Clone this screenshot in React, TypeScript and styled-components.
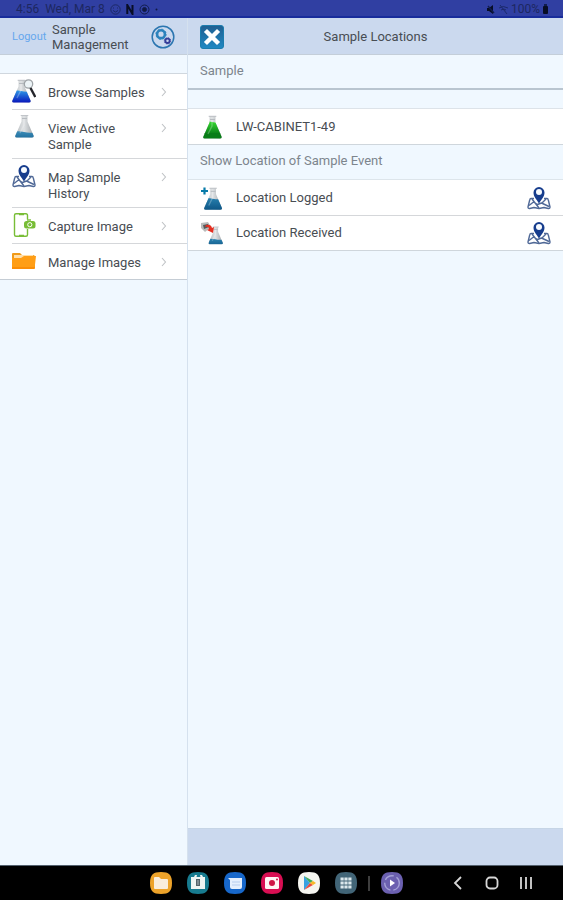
import React from "react";
import styled, { createGlobalStyle } from "styled-components";

const GlobalStyle = createGlobalStyle`
  * { box-sizing: border-box; }
  body { margin: 0; background: #f0f8ff; color: #484d53; font: 13px/16px Roboto, "Liberation Sans", sans-serif; }
  button { font: inherit; color: inherit; background: none; border: 0; padding: 0; cursor: pointer; }
  svg { display: block; flex: none; }
`;

const Screen = styled.div`
  min-height: 100vh;
  display: flex;
  flex-direction: column;
`;

const StatusBar = styled.header`
  height: 18px;
  display: flex;
  justify-content: space-between;
  padding: 2px 14px 0 16px;
  background: #303fa2;
  border-bottom: 2px solid #182c9b;
  color: #1d2760;
  font-size: 12px;
`;

const StatusGroup = styled.div<{ $gap: number }>`
  display: flex;
  align-items: center;
  gap: ${(p) => p.$gap}px;
`;

const Body = styled.div`
  flex: 1;
  display: grid;
  grid-template-columns: minmax(188px, 33.3%) 1fr;
`;

const Sidebar = styled.aside`
  border-right: 1px solid #d5e1ee;
`;

const Content = styled.main`
  display: flex;
  flex-direction: column;
`;

const TitleBar = styled.div`
  height: 37px;
  display: flex;
  align-items: center;
  padding: 1px 12px 0;
  background: #cbd9ee;
  border-bottom: 1px solid #c4ced9;
`;

const Logout = styled.button`
  width: 40px;
  text-align: left;
  color: #65a7ed;
  font-size: 11px;
`;

const AppTitle = styled.h1`
  flex: 1;
  margin: 0;
  font-size: 13px;
  font-weight: 400;
  line-height: 15px;
`;

const PageTitle = styled.h2`
  flex: 1;
  margin: 0;
  padding-right: 24px;
  text-align: center;
  font-size: 13px;
  font-weight: 400;
`;

const Menu = styled.ul`
  list-style: none;
  margin: 18px 0 0;
  padding: 0 0 0 12px;
  background: #fff;
  border-top: 1px solid #d0d7de;
  border-bottom: 1px solid #c5cdd5;
`;

const MenuItem = styled.li`
  & + & { border-top: 1px solid #d5d7da; }
`;

const MenuButton = styled.button`
  width: 100%;
  min-height: 35px;
  display: flex;
  align-items: flex-start;
  gap: 12px;
  padding: 5px 20px 5px 0;
  text-align: left;
`;

const MenuLabel = styled.span`
  flex: 1;
  padding-top: 6px;
`;

const Chevron = styled.span`
  padding-top: 8px;
`;

const SectionTitle = styled.h3<{ $ruled?: boolean }>`
  height: 35px;
  margin: 0;
  padding: 8px 12px;
  font-size: 13px;
  font-weight: 400;
  color: #7d858d;
  border-bottom: ${(p) => (p.$ruled ? "2px solid #b9c5d0" : "1px solid #dde5eb")};
`;

const List = styled.ul<{ $spaced?: boolean }>`
  list-style: none;
  margin: ${(p) => (p.$spaced ? 18 : 0)}px 0 0;
  padding: 0 0 0 12px;
  background: #fff;
  border-top: ${(p) => (p.$spaced ? "1px solid #dde3e9" : "0")};
  border-bottom: 1px solid #cfd6dc;
`;

const ListRow = styled.li`
  height: 35px;
  display: flex;
  align-items: center;
  gap: 12px;
  padding-right: 12px;
  & + & { border-top: 1px solid #d5d7da; }
`;

const RowLabel = styled.span`
  flex: 1;
`;

const Footer = styled.footer`
  height: 37px;
  margin-top: auto;
  background: #cbd9ee;
  border-top: 1px solid #c6d5e6;
`;

const NavBar = styled.nav`
  height: 35px;
  display: flex;
  align-items: center;
  justify-content: space-between;
  padding: 0 29px 0 149px;
  background: #000;
  border-top: 1px solid #53606d;
`;

const Apps = styled.div`
  display: flex;
  align-items: center;
  gap: 13px;
`;

const SystemKeys = styled.div`
  display: flex;
  gap: 18px;
`;

const Divider = styled.span`
  width: 2px;
  height: 15px;
  margin: 0 -3px;
  background: #3e3e3e;
`;

type FlaskKind = "search" | "plain" | "green" | "add" | "receive";

const liquids: Record<FlaskKind, [string, string]> = {
  search: ["#2f9be8", "#0712ba"],
  plain: ["#3b8cb8", "#0a5788"],
  green: ["#38dd32", "#087d17"],
  add: ["#267fae", "#0d5585"],
  receive: ["#2c83b1", "#084e7d"],
};

function Flask({ kind }: { kind: FlaskKind }) {
  const small = kind === "receive";
  const level = kind === "green" ? 7 : kind === "plain" ? 18 : kind === "receive" ? 17 : 12;
  const place = small ? "translate(6 5) scale(.78)" : kind === "add" ? "translate(1 1) scale(.97)" : kind === "search" ? "translate(-3 0)" : kind === "plain" ? "translate(0 -1)" : undefined;
  return (
    <svg width="24" height="24" viewBox="0 0 24 24" aria-hidden="true">
      <defs>
        <linearGradient id={`glass-${kind}`}>
          <stop stopColor="#a9adb1" /><stop offset=".5" stopColor="#dfe2e4" /><stop offset="1" stopColor="#92989d" />
        </linearGradient>
        <linearGradient id={`fill-${kind}`} x2="0" y2="1">
          <stop stopColor={liquids[kind][0]} /><stop offset="1" stopColor={liquids[kind][1]} />
        </linearGradient>
        <clipPath id={`body-${kind}`}><path d="M9.5 1.5h6v6l6 14q.7 2-1.7 2H4.8q-2.2 0-1.4-2l6.1-14z" /></clipPath>
      </defs>
      <g transform={place}>
        <g clipPath={`url(#body-${kind})`}>
          <path fill={`url(#glass-${kind})`} d="M0 0h24v24H0z" />
          <path fill={`url(#fill-${kind})`} d={`M0 ${level}q6-1.5 12 0t12 0v12H0z`} />
          {kind === "green" && <path fill="#087d17" d="M0 18h24v6H0z" />}
          <path d="M12 4v7l-4 8" fill="none" stroke="#fff" strokeOpacity=".25" strokeWidth="1.4" />
        </g>
        <path d="M8.7 1.3h7.6M10 4.5h5" stroke="#b7bbc0" strokeWidth="1" />
      </g>
      {kind === "search" && (
        <g fill="none">
          <circle cx="16.5" cy="5" r="4.2" fill="#edf4f7" stroke="#9fa4a8" strokeWidth="1.3" />
          <path d="m18.5 9 4.8 9" stroke="#24252b" strokeWidth="2.4" />
        </g>
      )}
      {kind === "add" && <path d="M4.5 1.5v7M1 5h7" stroke="#087ba9" strokeWidth="2.2" />}
      {small && (
        <g>
          <path d="m1 2 7-1 3 5-6 5-4-4z" fill="#b9bbbb" />
          <path d="m3 4 5-1 1 3-5 2z" fill="#55595a" />
          <path d="M6 4q5-1 6 3l2-1-1 6-6-3 2-1q0-3-4-2z" fill="#e32f21" />
        </g>
      )}
    </svg>
  );
}

function MapPin() {
  return (
    <svg width="24" height="24" viewBox="0 0 24 24" aria-hidden="true">
      <g fill="none" stroke="#506997" strokeWidth="1.4" strokeLinejoin="round">
        <path d="M7 12.5H4Q3 12.5 2.7 14L1 21q0 1.7 1.7 1.5L7 21.5l5 1 5-1 4.3 1q1.7.2 1.7-1.5l-1.7-7q-.3-1.5-1.3-1.5h-3" />
        <path d="m2 19.5 4.5-3.5 4 2.5 4-1.5 7.5 3.5M5 13l7 9M19 13l-4 4" />
      </g>
      <path d="M12 17.5C9.5 13.5 6.5 10.8 6.5 6.6a5.5 5.5 0 0 1 11 0C17.5 10.8 14.5 13.5 12 17.5z" fill="#173d8d" />
      <circle cx="12" cy="6.1" r="3" fill="#f7fbff" />
    </svg>
  );
}

function PhoneCamera() {
  return (
    <svg width="24" height="24" viewBox="0 0 24 24" aria-hidden="true" fill="none" stroke="#78bd36" strokeWidth="1.4">
      <path d="M15.5 6.5V2.3Q15.5.8 14 .8H4Q2.5.8 2.5 2.3v19.4q0 1.5 1.5 1.5h10q1.5 0 1.5-1.5V16M7 1.5h5M7 22.5h5" />
      <rect x="12" y="8" width="11.5" height="7.5" rx="2.5" fill="#78bd36" stroke="none" />
      <path d="M15 7h4" />
      <circle cx="17.8" cy="11.7" r="2.1" stroke="#fff" strokeWidth="1" />
    </svg>
  );
}

function Folder() {
  return (
    <svg width="24" height="24" viewBox="0 0 24 24" aria-hidden="true">
      <path d="M0 5q0-1 1-1h7l2 2h11q2 0 2 2v11H0z" fill="#f09a19" />
      <path d="M2 6h19v4H2z" fill="#ffdfaa" />
      <path d="M0 9h9l3-2h12l-1.5 13H0z" fill="#ff9e16" />
      <path d="M0 18h22.7l-.2 2H0z" fill="#fb8e08" />
    </svg>
  );
}

function ArrowRight() {
  return <svg width="6" height="10" viewBox="0 0 6 10" aria-hidden="true"><path d="m1 1 3.5 4L1 9" fill="none" stroke="#bfc2c5" strokeWidth="1.1" /></svg>;
}

function Gears() {
  return (
    <svg width="24" height="24" viewBox="0 0 24 24" aria-hidden="true" fill="none">
      <circle cx="12" cy="12" r="10.8" stroke="#2c76b0" strokeWidth="1.5" />
      <circle cx="10" cy="9.2" r="3.9" stroke="#2b82bc" strokeWidth="2.6" />
      <circle cx="10" cy="9.2" r="5.1" stroke="#2b82bc" strokeWidth="1" strokeDasharray="2 2" />
      <circle cx="16.5" cy="15.8" r="2.2" stroke="#343e99" strokeWidth="1.9" />
      <circle cx="16.5" cy="15.8" r="3.2" stroke="#343e99" strokeWidth=".8" strokeDasharray="1.3 1.2" />
    </svg>
  );
}

function CloseIcon() {
  return (
    <svg width="24" height="24" viewBox="0 0 24 24" aria-hidden="true">
      <defs><linearGradient id="close-fill" x2="0" y2="1"><stop stopColor="#205f91" /><stop offset="1" stopColor="#2089c3" /></linearGradient></defs>
      <rect x=".5" y=".5" width="23" height="23" rx="2.5" fill="url(#close-fill)" stroke="#1c7dae" />
      <path d="m7 7 10 10M17 7 7 17" stroke="#fff" strokeWidth="4.4" strokeLinecap="square" />
    </svg>
  );
}

function StatusGlyph({ kind }: { kind: "face" | "n" | "target" | "dot" | "mute" | "wifi" | "battery" }) {
  const width = kind === "dot" ? 3 : kind === "battery" ? 7 : kind === "n" ? 8 : 11;
  return (
    <svg width={width} height="11" viewBox={`0 0 ${width} 11`} fill="none" stroke="#111d4d" aria-hidden="true">
      {kind === "face" && <><circle cx="5.5" cy="5.5" r="4.7" stroke="#1d2966" /><path d="M3 4h1m3 0h1M3 6.5q2.5 3 5 0" stroke="#1d2966" /></>}
      {kind === "n" && <path d="M1.3 10V1l5.2 9V1" stroke="#080e26" strokeWidth="2" />}
      {kind === "target" && <><circle cx="5.5" cy="5.5" r="4.5" /><circle cx="5.5" cy="5.5" r="2" fill="#101943" /></>}
      {kind === "dot" && <circle cx="1.5" cy="5.5" r="1" fill="#111943" stroke="none" />}
      {kind === "mute" && <><path d="M2 4h2l4-3v9L4 7H2z" fill="#070d25" stroke="none" /><path d="m3 2 6 7" strokeWidth="1.4" /></>}
      {kind === "wifi" && <path d="M1 4q4-3 9 0M3 6q3-2 5 0M2 1l7 9" stroke="#1c296b" />}
      {kind === "battery" && <><rect x="1" y="2" width="5" height="8" rx="1" fill="#070d25" stroke="none" /><path d="M2 1h3" strokeWidth="2" /></>}
    </svg>
  );
}

type AppKind = "files" | "store" | "messages" | "camera" | "play" | "grid" | "media";
const appColors: Record<AppKind, string> = { files: "#eda32a", store: "#177b8f", messages: "#1767ca", camera: "#d80e52", play: "#f5f5f0", grid: "#426577", media: "#6b60b0" };

function DockIcon({ kind }: { kind: AppKind }) {
  return (
    <svg width="24" height="24" viewBox="0 0 24 24" aria-hidden="true">
      <path d="M12 1C20 1 23 4 23 12s-3 11-11 11S1 20 1 12 4 1 12 1z" fill={appColors[kind]} />
      {kind === "files" && <path d="M5 7q0-1 1-1h4l2 2h6q1 0 1 1v8q0 1-1 1H6q-1 0-1-1z" fill="#f9eddc" />}
      {kind === "store" && <><path d="M5 6h3l1-2h2l-.5 2h4L14 4h2l1 2h2v12H5z" fill="#eef5f3" /><path d="M10 8h4v7h-4z" fill="#53636a" /><path d="M12 9v5" stroke="#a8b5b8" /></>}
      {kind === "messages" && <><path d="M5 7h14v9q0 2-2 2H9q-2 0-2-2V9z" fill="#e5effd" /><path d="M9 11h8M9 14h8" stroke="#b7cdee" /></>}
      {kind === "camera" && <><rect x="5" y="6" width="14" height="12" rx="1.5" fill="#fff4f4" /><circle cx="12" cy="12" r="3" fill="#cf1646" /><circle cx="17" cy="8.5" r="1" fill="#cf1646" /></>}
      {kind === "play" && <><path d="M7 5v14l6-7z" fill="#39a2e1" /><path d="m7 5 9 5-3 2z" fill="#40aa5b" /><path d="m7 19 9-5-3-2z" fill="#ea4b40" /><path d="m16 10 3 2-3 2-3-2z" fill="#f7b927" /></>}
      {kind === "grid" && <path d="M6.5 8h11M6.5 12h11M6.5 16h11" stroke="#dce8ec" strokeWidth="3.2" strokeDasharray="3.2 .7" />}
      {kind === "media" && <><circle cx="12" cy="12" r="7.3" fill="none" stroke="#a5a2d7" strokeWidth="1.4" strokeDasharray="10 3" /><path d="m10 8.5 5 3.5-5 3.5z" fill="#fff" /></>}
    </svg>
  );
}

const menu = [
  { label: "Browse Samples", icon: <Flask kind="search" /> },
  { label: "View Active Sample", icon: <Flask kind="plain" /> },
  { label: "Map Sample History", icon: <MapPin /> },
  { label: "Capture Image", icon: <PhoneCamera /> },
  { label: "Manage Images", icon: <Folder /> },
];

const dock: AppKind[] = ["files", "store", "messages", "camera", "play", "grid"];

export default function App() {
  return (
    <Screen>
      <GlobalStyle />
      <StatusBar>
        <StatusGroup $gap={5}>
          <StatusGroup $gap={6}><span>4:56</span><span>Wed, Mar 8</span></StatusGroup>
          <StatusGlyph kind="face" /><StatusGlyph kind="n" /><StatusGlyph kind="target" /><StatusGlyph kind="dot" />
        </StatusGroup>
        <StatusGroup $gap={2}>
          <StatusGlyph kind="mute" /><StatusGlyph kind="wifi" /><span>100%</span><StatusGlyph kind="battery" />
        </StatusGroup>
      </StatusBar>
      <Body>
        <Sidebar>
          <TitleBar>
            <Logout>Logout</Logout>
            <AppTitle>Sample Management</AppTitle>
            <button aria-label="Settings"><Gears /></button>
          </TitleBar>
          <Menu>
            {menu.map((item) => (
              <MenuItem key={item.label}>
                <MenuButton>
                  {item.icon}
                  <MenuLabel>{item.label}</MenuLabel>
                  <Chevron><ArrowRight /></Chevron>
                </MenuButton>
              </MenuItem>
            ))}
          </Menu>
        </Sidebar>
        <Content>
          <TitleBar>
            <button aria-label="Close"><CloseIcon /></button>
            <PageTitle>Sample Locations</PageTitle>
          </TitleBar>
          <SectionTitle $ruled>Sample</SectionTitle>
          <List $spaced>
            <ListRow><Flask kind="green" /><RowLabel>LW-CABINET1-49</RowLabel></ListRow>
          </List>
          <SectionTitle>Show Location of Sample Event</SectionTitle>
          <List>
            <ListRow><Flask kind="add" /><RowLabel>Location Logged</RowLabel><button aria-label="Map location logged"><MapPin /></button></ListRow>
            <ListRow><Flask kind="receive" /><RowLabel>Location Received</RowLabel><button aria-label="Map location received"><MapPin /></button></ListRow>
          </List>
          <Footer />
        </Content>
      </Body>
      <NavBar>
        <Apps>
          {dock.map((kind) => <button key={kind} aria-label={kind}><DockIcon kind={kind} /></button>)}
          <Divider />
          <button aria-label="media"><DockIcon kind="media" /></button>
        </Apps>
        <SystemKeys>
          <button aria-label="Back"><svg width="16" height="16" fill="none" stroke="#d6d6d6" strokeWidth="1.8"><path d="m11 2-6 6 6 6" /></svg></button>
          <button aria-label="Home"><svg width="16" height="16" fill="none" stroke="#d6d6d6" strokeWidth="1.8"><rect x="2.5" y="2.5" width="11" height="11" rx="3.5" /></svg></button>
          <button aria-label="Recent apps"><svg width="16" height="16" fill="none" stroke="#d6d6d6" strokeWidth="1.8"><path d="M3 2v12M8 2v12M13 2v12" /></svg></button>
        </SystemKeys>
      </NavBar>
    </Screen>
  );
}
